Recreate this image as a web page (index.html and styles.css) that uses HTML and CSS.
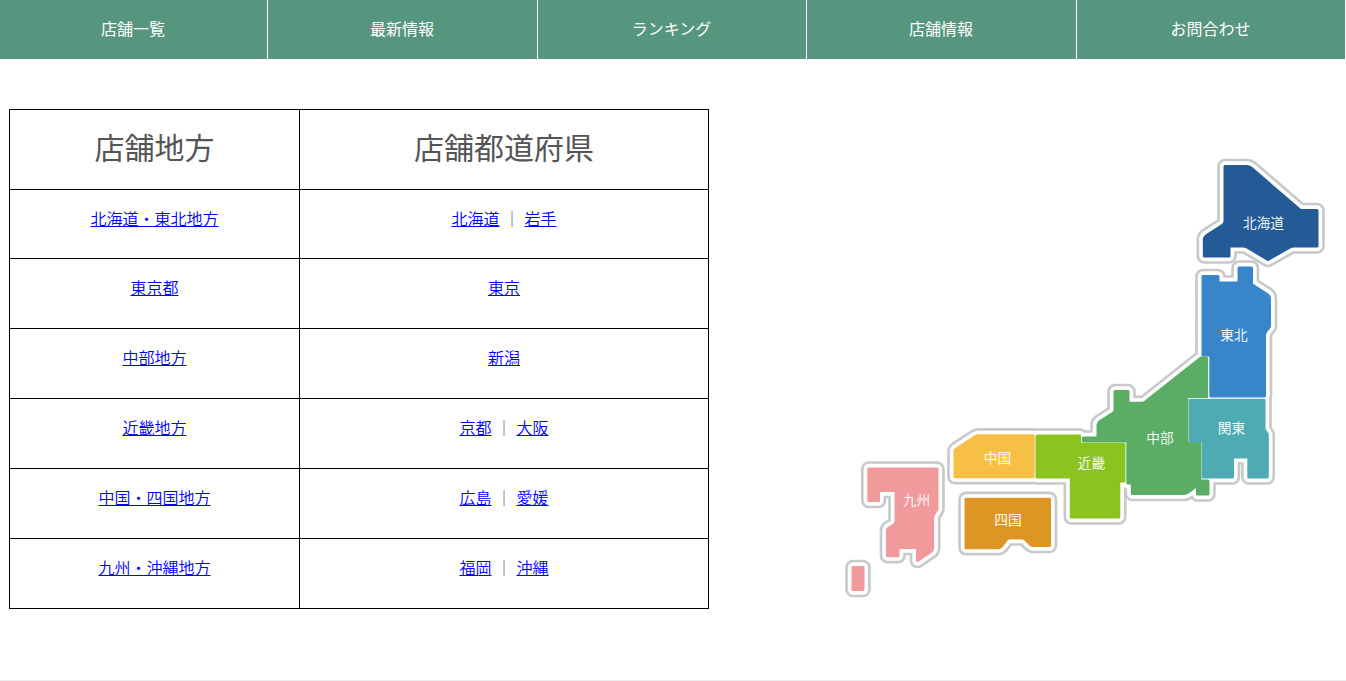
FILE: index.html
```html
<!DOCTYPE html>
<html lang="ja">
<head>
<meta charset="utf-8">
<title>店舗一覧</title>
<link rel="stylesheet" href="styles.css">
</head>
<body>
<nav class="nav">
  <a class="nav-item">店舗一覧</a>
  <a class="nav-item">最新情報</a>
  <a class="nav-item">ランキング</a>
  <a class="nav-item">店舗情報</a>
  <a class="nav-item">お問合わせ</a>
</nav>
<main class="main">
  <table class="shops">
    <tr class="head"><th class="area">店舗地方</th><th>店舗都道府県</th></tr>
    <tr class="first"><td><a href="#">北海道・東北地方</a></td><td><a href="#">北海道</a><span class="sep">｜</span><a href="#">岩手</a></td></tr>
    <tr><td><a href="#">東京都</a></td><td><a href="#">東京</a></td></tr>
    <tr><td><a href="#">中部地方</a></td><td><a href="#">新潟</a></td></tr>
    <tr><td><a href="#">近畿地方</a></td><td><a href="#">京都</a><span class="sep">｜</span><a href="#">大阪</a></td></tr>
    <tr><td><a href="#">中国・四国地方</a></td><td><a href="#">広島</a><span class="sep">｜</span><a href="#">愛媛</a></td></tr>
    <tr><td><a href="#">九州・沖縄地方</a></td><td><a href="#">福岡</a><span class="sep">｜</span><a href="#">沖縄</a></td></tr>
  </table>
  <svg class="map" viewBox="840 150 490 455" width="490" height="455">
    <defs>
      <path id="hokkaido" d="M1225 166.500H1247Q1249 166.500 1251 168L1298 208.500Q1300 210.500 1302 210.500H1317V246H1294Q1292 246 1290 247L1268 259.500L1247 247Q1245 246 1243 246H1229V256H1204.300V239Q1204.300 237.500 1206 236L1223 225Q1225 223.500 1225 221Z"/>
      <path id="tohoku" d="M1203 276.500H1218V283H1239V268H1251.500V284.500L1267.500 294.700Q1269.500 296 1269.500 299V326.500L1266 331Q1264.500 333 1264.500 336V396H1210.800V355H1203Z"/>
      <path id="chubu" d="M1206.700 358H1201L1146 401.500Q1144 403.300 1142 403.300H1128V391.500H1115V410Q1115 412 1113 413.300L1100 421.500Q1098 423 1098 425V438H1083.500V441H1127.800V483H1132.300V493.500H1184Q1186 493.500 1188 492L1197.500 485V494H1208V481H1200V443.500H1187V396.500H1206.700Z"/>
      <path id="kanto" d="M1190.300 400.300H1264V429L1267.300 434.500V477H1248.800V457H1232.500V477H1203.300V441H1190.300Z"/>
      <path id="kinki" d="M1037 436H1079.800V444.300H1124V481H1118.800V517H1071.300V477H1037Z"/>
      <path id="chugoku" d="M955 451Q955 450 956.500 449L974 437.500Q976 435.800 978.500 435.800H1033.200V476.700H955Z"/>
      <path id="shikoku" d="M966 499.300H1049.500V545.500H1033Q1031.500 545.500 1030 544L1025.500 539.500Q1024 538 1022 538H1010Q1008 538 1006.500 539.500L1001.500 546Q1000 547.700 998 547.700H966Z"/>
      <path id="kyushu" d="M868.800 469H937V509L933.500 515Q932.700 517 932.700 519V548.500L931.500 551L917.500 560.500V547.500H898V555.700H887.500V530Q887.500 529 889 528L894 525Q896 523.500 896 521V490.500H878.500V500.500H868.800Z"/>
      <path id="okinawa" d="M853 567.500H863V589.500H853Z"/>
      <g id="honshu"><use href="#tohoku"/><use href="#chubu"/><use href="#kanto"/><use href="#kinki"/><use href="#chugoku"/></g>
      <g id="islands"><use href="#shikoku"/><use href="#kyushu"/><use href="#okinawa"/></g>
    </defs>
    <g class="coast"><use href="#hokkaido"/></g>
    <g class="shore"><use href="#hokkaido"/></g>
    <g class="coast"><use href="#honshu"/><use href="#islands"/></g>
    <g class="shore"><use href="#honshu"/><use href="#islands"/></g>
    <g class="land">
      <use class="c-hokkaido" href="#hokkaido"/>
      <use class="c-tohoku" href="#tohoku"/>
      <use class="c-chubu" href="#chubu"/>
      <use class="c-kanto" href="#kanto"/>
      <use class="c-kinki" href="#kinki"/>
      <use class="c-chugoku" href="#chugoku"/>
      <use class="c-shikoku" href="#shikoku"/>
      <use class="c-kyushu" href="#kyushu"/>
      <use class="c-kyushu" href="#okinawa"/>
    </g>
    <g class="labels">
      <text x="1263.500" y="228">北海道</text>
      <text x="1234" y="340">東北</text>
      <text x="1160" y="443">中部</text>
      <text x="1231.500" y="433">関東</text>
      <text x="1091.500" y="468">近畿</text>
      <text x="997.500" y="463">中国</text>
      <text x="1008" y="525">四国</text>
      <text x="916.500" y="505">九州</text>
    </g>
  </svg>
</main>
</body>
</html>
```
FILE: styles.css
```css
* { box-sizing: border-box; }
body {
  margin: 0;
  background: #fff;
  color: #555;
  font: 16px/24px "Noto Sans CJK JP", sans-serif;
}
.nav {
  display: grid;
  grid-template-columns: 268px 270px 269px 270px 269px;
  height: 59px;
}
.nav-item {
  padding-right: 1px;
  background: #56967f;
  border-right: 1px solid #fff;
  color: #fff;
  line-height: 56px;
  text-align: center;
}
.main {
  display: flex;
  align-items: flex-start;
  height: 622px;
  padding: 50px 16px 0 9px;
  border-bottom: 1px solid #eee;
}
.shops {
  width: 700px;
  table-layout: fixed;
  border-collapse: collapse;
  text-align: center;
}
.shops th, .shops td {
  border: 1px solid #000;
  padding: 16px 0 0;
  height: 70px;
  vertical-align: top;
  font-weight: 350;
}
.shops .head th {
  height: 80px;
  padding-top: 14px;
  font-size: 30px;
  font-weight: 400;
  line-height: 44px;
}
.shops .first td { height: 69px; }
.shops .area { width: 290px; }
.shops a { color: #00f; text-underline-offset: 1px; text-decoration-thickness: 1px; }
.sep { display: inline-block; width: 25px; font-size: 16px; text-align: center; vertical-align: top; }
.map { margin: 41px 0 0 auto; }
.coast { fill: #c8c9ca; stroke: #c8c9ca; stroke-width: 15.600px; stroke-linejoin: round; }
.shore { fill: #fff; stroke: #fff; stroke-width: 10.300px; stroke-linejoin: round; }
.land { stroke-width: 3px; stroke-linejoin: round; }
.c-hokkaido { fill: #245b97; stroke: #245b97; }
.c-tohoku { fill: #3985c9; stroke: #3985c9; }
.c-chubu { fill: #5bad66; stroke: #5bad66; }
.c-kanto { fill: #4eaab3; stroke: #4eaab3; }
.c-kinki { fill: #8bc320; stroke: #8bc320; }
.c-chugoku { fill: #f6c044; stroke: #f6c044; }
.c-shikoku { fill: #dd9624; stroke: #dd9624; }
.c-kyushu { fill: #f09a9c; stroke: #f09a9c; }
.labels { fill: #fff; font-size: 13.700px; font-weight: 350; text-anchor: middle; }
```
